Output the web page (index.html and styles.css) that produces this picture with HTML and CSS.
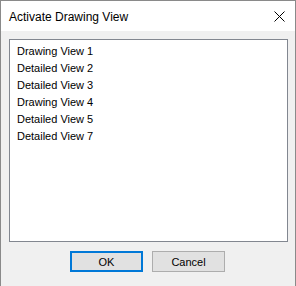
FILE: index.html
```html
<!DOCTYPE html>
<html>
<head>
<meta charset="utf-8">
<link rel="stylesheet" href="styles.css">
</head>
<body>
<div class="window">
  <div class="titlebar">
    <span class="title">Activate Drawing View</span>
    <svg class="close" width="11" height="11" viewBox="0 0 11 11">
      <path d="M0.5 0.5 L10.5 10.5 M10.5 0.5 L0.5 10.5" stroke="#000" stroke-width="1" fill="none"/>
    </svg>
  </div>
  <div class="content">
    <div class="list">
      <div class="item">Drawing View 1</div>
      <div class="item">Detailed View 2</div>
      <div class="item">Detailed View 3</div>
      <div class="item">Drawing View 4</div>
      <div class="item">Detailed View 5</div>
      <div class="item">Detailed View 7</div>
    </div>
    <div class="buttons">
      <div class="btn btn-default">OK</div>
      <div class="btn">Cancel</div>
    </div>
  </div>
</div>
</body>
</html>
```
FILE: styles.css
```css
html, body {
  margin: 0;
  padding: 0;
  background: #f0f0f0;
}
.window {
  width: 296px;
  height: 286px;
  box-sizing: border-box;
  border: 1px solid #8a8a8a;
  border-bottom: none;
  background: #f0f0f0;
  display: flex;
  flex-direction: column;
  font-family: "Liberation Sans", Arial, sans-serif;
  color: #000;
}
.titlebar {
  height: 30px;
  background: #fff;
  display: flex;
  align-items: center;
  padding-left: 8px;
  padding-right: 10px;
}
.title {
  font-size: 12px;
  margin-top: 1px;
}
.close {
  margin-left: auto;
  display: block;
  margin-top: 1px;
}
.content {
  padding: 8px 7px 0 8px;
  display: flex;
  flex-direction: column;
}
.list {
  height: 203px;
  box-sizing: border-box;
  border: 1px solid #828790;
  background: #fff;
  padding: 3px 0 0 7px;
}
.item {
  font-size: 11px;
  line-height: 17px;
  height: 17px;
  white-space: nowrap;
}
.buttons {
  display: flex;
  gap: 9px;
  margin-top: 9px;
  padding-left: 61px;
}
.btn {
  width: 73px;
  height: 21px;
  box-sizing: border-box;
  border: 1px solid #adadad;
  background: #e1e1e1;
  font-size: 11px;
  display: flex;
  align-items: center;
  justify-content: center;
}
.btn-default {
  border: 2px solid #0078d7;
}
```
